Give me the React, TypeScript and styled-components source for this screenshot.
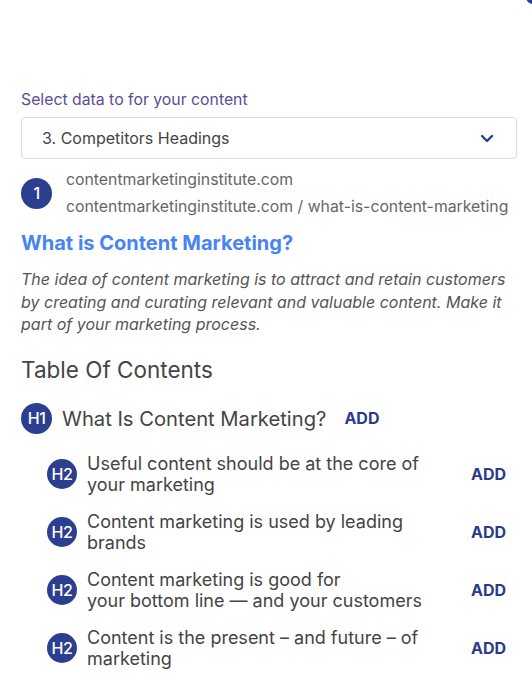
import React from "react";
import styled, { createGlobalStyle } from "styled-components";

const Global = createGlobalStyle`
  html, body { margin: 0; padding: 0; background: #ffffff; }
  body { font-family: Inter, "Noto Sans", sans-serif; }
  * { box-sizing: border-box; }
`;

const Page = styled.div`
  position: relative;
  width: 532px;
  min-height: 687px;
  padding: 90px 15px 0 21px;
  overflow: hidden;
`;

const CornerDot = styled.div`
  position: absolute;
  top: -10px;
  right: -8px;
  width: 14px;
  height: 14px;
  border-radius: 50%;
  background: #2c3e8f;
`;

const Label = styled.div`
  font-size: 15.8px;
  line-height: 20px;
  color: #5c4d96;
`;

const Select = styled.div`
  margin-top: 7px;
  height: 42px;
  border: 1px solid #dcdcdc;
  border-radius: 4px;
  display: flex;
  align-items: center;
  justify-content: space-between;
  padding: 0 22px 0 20px;
  font-size: 16px;
  color: #444;
`;

const SourceRow = styled.div`
  margin-top: 7px;
  display: flex;
  align-items: center;
  gap: 14px;
`;

const Badge = styled.div<{ $size: number }>`
  flex: none;
  width: ${(p) => p.$size}px;
  height: ${(p) => p.$size}px;
  border-radius: 50%;
  background: #2c3e8f;
  color: #fff;
  display: flex;
  align-items: center;
  justify-content: center;
  font-size: 16px;
  font-weight: 500;
  letter-spacing: -0.5px;
`;

const SourceText = styled.div`
  font-size: 15.8px;
  line-height: 27px;
  color: #666;
`;

const Title = styled.div`
  margin-top: 11px;
  font-size: 20px;
  line-height: 24px;
  font-weight: 700;
  color: #4684f2;
`;

const Para = styled.p`
  margin: 13px 0 0;
  font-size: 16px;
  line-height: 22.5px;
  font-style: italic;
  color: #555;
`;

const TocTitle = styled.div`
  margin-top: 20px;
  font-size: 22.5px;
  line-height: 28px;
  color: #444;
`;

const H1Row = styled.div`
  margin-top: 19px;
  display: flex;
  align-items: center;
  gap: 10px;
`;

const H1Text = styled.span`
  font-size: 20.2px;
  color: #444;
`;

const Add = styled.span<{ $offset: number }>`
  margin-left: ${(p) => p.$offset}px;
  font-size: 16px;
  font-weight: 700;
  color: #2b3a8a;
`;

const H2List = styled.div`
  margin-top: 19px;
  padding-left: 26px;
  display: flex;
  flex-direction: column;
  gap: 16px;
`;

const H2Row = styled.div`
  display: flex;
  align-items: center;
  gap: 10px;
`;

const H2Text = styled.div`
  width: 350px;
  font-size: 18px;
  line-height: 21px;
  color: #444;
`;

const Chevron = () => (
  <svg width="14" height="9" viewBox="0 0 14 9" fill="none">
    <path d="M2 2l5 5 5-5" stroke="#2c3e8f" strokeWidth="2.4" strokeLinecap="round" strokeLinejoin="round" />
  </svg>
);

const h2s: React.ReactNode[] = [
  "Useful content should be at the core of your marketing",
  "Content marketing is used by leading brands",
  <>Content marketing is good for<br />your bottom line — and your customers</>,
  "Content is the present – and future – of marketing",
];

export default function App() {
  return (
    <Page>
      <Global />
      <CornerDot />
      <Label>Select data to for your content</Label>
      <Select>
        <span>3. Competitors Headings</span>
        <Chevron />
      </Select>
      <SourceRow>
        <Badge $size={31}>1</Badge>
        <SourceText>
          contentmarketinginstitute.com
          <br />
          contentmarketinginstitute.com / what-is-content-marketing
        </SourceText>
      </SourceRow>
      <Title>What is Content Marketing?</Title>
      <Para>
        The idea of content marketing is to attract and retain customers by creating and curating relevant and valuable
        content. Make it part of your marketing process.
      </Para>
      <TocTitle>Table Of Contents</TocTitle>
      <H1Row>
        <Badge $size={31}>H1</Badge>
        <H1Text>What Is Content Marketing?</H1Text>
        <Add $offset={8}>ADD</Add>
      </H1Row>
      <H2List>
        {h2s.map((t, i) => (
          <H2Row key={i}>
            <Badge $size={30}>H2</Badge>
            <H2Text>{t}</H2Text>
            <Add $offset={24}>ADD</Add>
          </H2Row>
        ))}
      </H2List>
    </Page>
  );
}
